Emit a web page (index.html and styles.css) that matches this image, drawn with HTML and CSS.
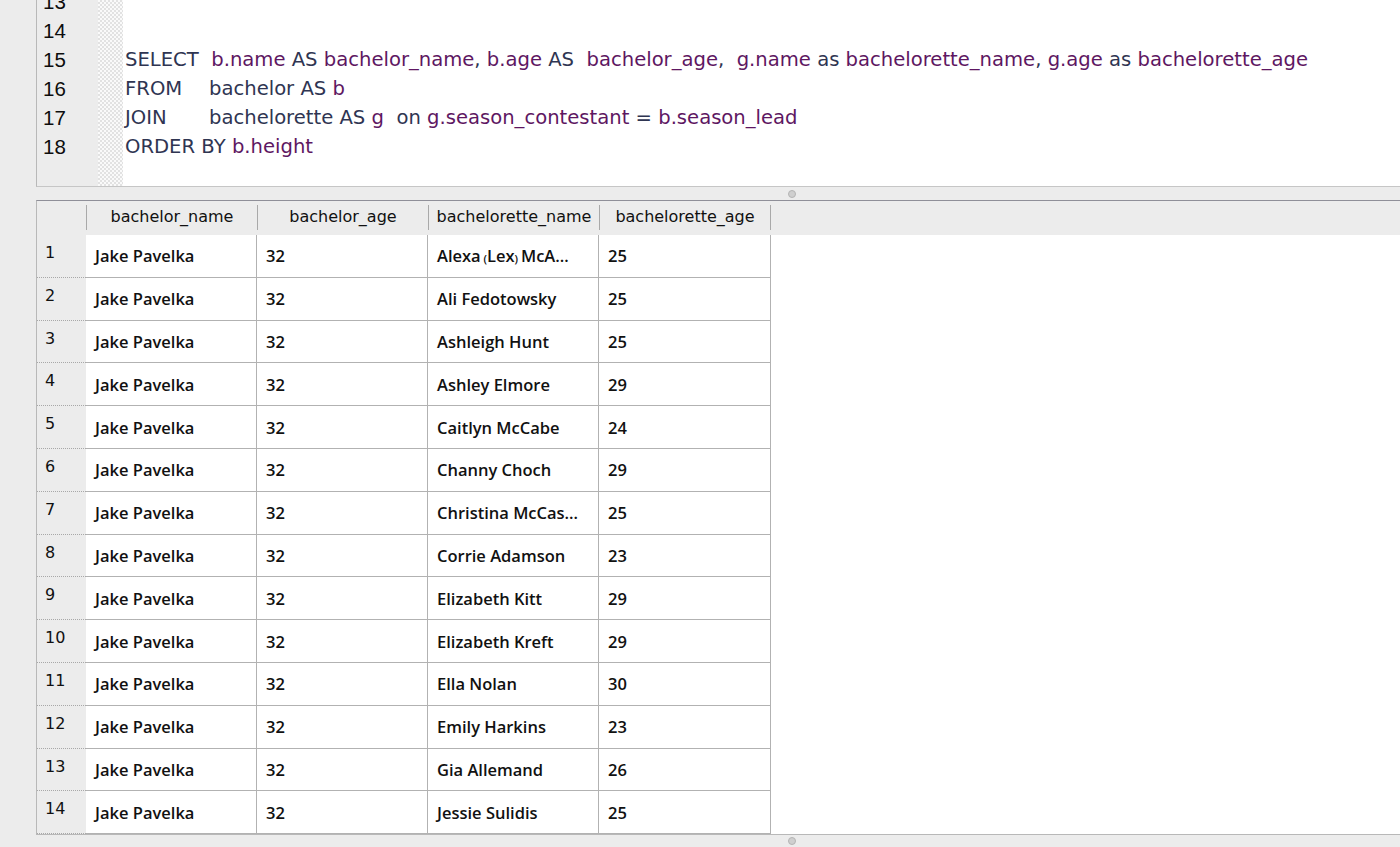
FILE: index.html
```html
<!DOCTYPE html>
<html>
<head>
<meta charset="utf-8">
<link rel="stylesheet" href="styles.css">
</head>
<body>
<div class="editor">
  <div class="gutter">
    <div class="ln">13</div>
    <div class="ln">14</div>
    <div class="ln">15</div>
    <div class="ln">16</div>
    <div class="ln">17</div>
    <div class="ln">18</div>
  </div>
  <div class="fold"></div>
  <div class="code">
    <div class="line"> </div>
    <div class="line"> </div>
    <div class="line"><span class="k">SELECT  </span><span class="i">b.name</span><span class="k"> AS </span><span class="i">bachelor_name</span><span class="k">, </span><span class="i">b.age</span><span class="k"> AS  </span><span class="i">bachelor_age</span><span class="k">,  </span><span class="i">g.name</span><span class="k"> as </span><span class="i">bachelorette_name</span><span class="k">, </span><span class="i">g.age</span><span class="k"> as </span><span class="i">bachelorette_age</span></div>
    <div class="line"><span class="k tab">FROM</span><span class="k">bachelor AS </span><span class="i">b</span></div>
    <div class="line"><span class="k tab">JOIN</span><span class="k">bachelorette AS </span><span class="i">g</span><span class="k">  on </span><span class="i">g.season_contestant</span><span class="k"> = </span><span class="i">b.season_lead</span></div>
    <div class="line"><span class="k">ORDER BY </span><span class="i">b.height</span></div>
  </div>
</div>
<div class="splitter"><span class="knob"></span></div>
<div class="results">
  <div class="head">
    <div class="hnum"></div>
    <div class="hcell">bachelor_name</div>
    <div class="hcell">bachelor_age</div>
    <div class="hcell">bachelorette_name</div>
    <div class="hcell last">bachelorette_age</div>
  </div>
  <div class="rows">
    <div class="row"><div class="num">1</div><div class="cell">Jake Pavelka</div><div class="cell">32</div><div class="cell">Alexa<span class="par"> (</span>Lex<span class="par">) </span>McA…</div><div class="cell">25</div></div>
    <div class="row"><div class="num">2</div><div class="cell">Jake Pavelka</div><div class="cell">32</div><div class="cell">Ali Fedotowsky</div><div class="cell">25</div></div>
    <div class="row"><div class="num">3</div><div class="cell">Jake Pavelka</div><div class="cell">32</div><div class="cell">Ashleigh Hunt</div><div class="cell">25</div></div>
    <div class="row"><div class="num">4</div><div class="cell">Jake Pavelka</div><div class="cell">32</div><div class="cell">Ashley Elmore</div><div class="cell">29</div></div>
    <div class="row"><div class="num">5</div><div class="cell">Jake Pavelka</div><div class="cell">32</div><div class="cell">Caitlyn McCabe</div><div class="cell">24</div></div>
    <div class="row"><div class="num">6</div><div class="cell">Jake Pavelka</div><div class="cell">32</div><div class="cell">Channy Choch</div><div class="cell">29</div></div>
    <div class="row"><div class="num">7</div><div class="cell">Jake Pavelka</div><div class="cell">32</div><div class="cell">Christina McCas…</div><div class="cell">25</div></div>
    <div class="row"><div class="num">8</div><div class="cell">Jake Pavelka</div><div class="cell">32</div><div class="cell">Corrie Adamson</div><div class="cell">23</div></div>
    <div class="row"><div class="num">9</div><div class="cell">Jake Pavelka</div><div class="cell">32</div><div class="cell">Elizabeth Kitt</div><div class="cell">29</div></div>
    <div class="row"><div class="num">10</div><div class="cell">Jake Pavelka</div><div class="cell">32</div><div class="cell">Elizabeth Kreft</div><div class="cell">29</div></div>
    <div class="row"><div class="num">11</div><div class="cell">Jake Pavelka</div><div class="cell">32</div><div class="cell">Ella Nolan</div><div class="cell">30</div></div>
    <div class="row"><div class="num">12</div><div class="cell">Jake Pavelka</div><div class="cell">32</div><div class="cell">Emily Harkins</div><div class="cell">23</div></div>
    <div class="row"><div class="num">13</div><div class="cell">Jake Pavelka</div><div class="cell">32</div><div class="cell">Gia Allemand</div><div class="cell">26</div></div>
    <div class="row"><div class="num">14</div><div class="cell">Jake Pavelka</div><div class="cell">32</div><div class="cell">Jessie Sulidis</div><div class="cell">25</div></div>
  </div>
</div>
<div class="splitter bottom"><span class="knob"></span></div>
</body>
</html>
```
FILE: styles.css
```css
html, body {
  margin: 0;
  padding: 0;
  background: #ececec;
  height: 847px;
  overflow: hidden;
}
body {
  font-family: "DejaVu Sans", sans-serif;
  color: #111;
}
.editor {
  margin-left: 36px;
  height: 186px;
  display: flex;
  border-left: 1px solid #b8b8b8;
  border-bottom: 1px solid #c6c6c6;
  background: #fff;
  overflow: hidden;
}
.gutter {
  width: 61px;
  flex: none;
  background: #ececec;
  margin-top: -13px;
  font-family: "Liberation Sans", Arial, sans-serif;
  font-size: 20.5px;
  color: #0d0d0d;
}
.ln {
  height: 29px;
  line-height: 29px;
  padding-left: 6px;
}
.fold {
  width: 25px;
  flex: none;
  background-color: #fafafa;
  background-image:
    linear-gradient(45deg, #e2e2e2 25%, transparent 25%, transparent 75%, #e2e2e2 75%),
    linear-gradient(45deg, #e2e2e2 25%, transparent 25%, transparent 75%, #e2e2e2 75%);
  background-size: 4px 4px;
  background-position: 0 0, 2px 2px;
}
.code {
  flex: 1;
  margin-top: -13px;
  padding-left: 2px;
  font-size: 19.6px;
}
.line {
  height: 29px;
  line-height: 29px;
  white-space: pre;
}
.k { color: #2f3552; }
.i { color: #5e1762; }
.tab {
  display: inline-block;
  width: 84px;
}
.splitter {
  height: 13px;
  display: flex;
  align-items: center;
  padding-left: 788px;
  box-sizing: border-box;
}
.splitter.bottom {
  height: 12px;
}
.knob {
  width: 8px;
  height: 8px;
  border-radius: 50%;
  background: #cfcfcf;
  border: 1px solid #b4b4b4;
  box-sizing: border-box;
}
.results {
  margin-left: 36px;
  height: 635px;
  border-top: 1px solid #8f8f98;
  border-left: 1px solid #b8b8b8;
  border-bottom: 1px solid #b8b8b8;
  background: #fff;
  box-sizing: border-box;
  overflow: hidden;
}
.head {
  height: 34px;
  background: #ececec;
  display: flex;
  font-size: 16px;
  color: #111;
}
.hnum {
  width: 49px;
  flex: none;
}
.hcell {
  width: 171px;
  flex: none;
  box-sizing: border-box;
  text-align: center;
  border-left: 1px solid #a9a9a9;
  margin: 4px 0 5px 0;
  line-height: 24px;
  height: 25px;
}
.hcell.last {
  border-right: 1px solid #a9a9a9;
  width: 172px;
}
.rows {
  display: grid;
  grid-auto-rows: 42.8px;
}
.row {
  display: flex;
}
.num {
  width: 49px;
  flex: none;
  box-sizing: border-box;
  background: #ececec;
  padding: 8px 0 0 8px;
  font-size: 16px;
  border-bottom: 1px dotted #a8a8a8;
}
.cell {
  width: 171px;
  flex: none;
  box-sizing: border-box;
  border-right: 1px solid #b2b2b2;
  border-bottom: 1px solid #b2b2b2;
  padding: 0 0 0 9px;
  display: flex;
  align-items: center;
  font-family: "Open Sans", sans-serif;
  font-weight: 600;
  font-size: 16.5px;
  color: #111;
  white-space: nowrap;
  overflow: hidden;
}
.cell:last-child {
  width: 172px;
}
.par {
  font-size: 11px;
  position: relative;
  top: 3px;
  white-space: pre;
}
```
